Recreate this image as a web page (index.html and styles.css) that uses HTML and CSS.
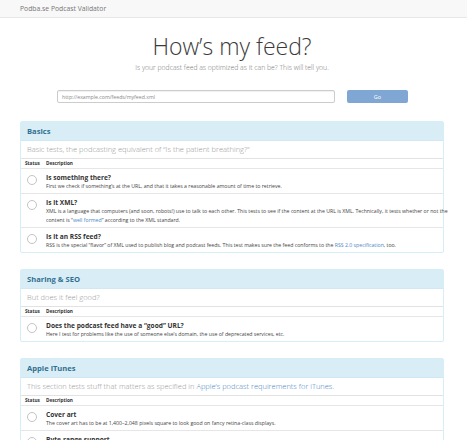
FILE: index.html
```html
<!DOCTYPE html>
<html lang="en">
<head>
<meta charset="utf-8">
<title>Podba.se Podcast Validator</title>
<link rel="stylesheet" href="styles.css">
</head>
<body>
<nav class="navbar"><span class="brand">Podba.se Podcast Validator</span></nav>
<main class="page">
  <header class="hero">
    <h1 class="title">How’s my feed?</h1>
    <p class="lead">Is your podcast feed as optimized as it can be? This will tell you.</p>
  </header>
  <form class="feed-form">
    <input class="feed-input" type="text" placeholder="http://example.com/feeds/myfeed.xml">
    <button class="go" type="button">Go</button>
  </form>

  <section class="panel">
    <div class="panel-heading">Basics</div>
    <div class="panel-body">Basic tests, the podcasting equivalent of “Is the patient breathing?”</div>
    <div class="thead"><span>Status</span><span>Description</span></div>
    <div class="row">
      <span class="status"></span>
      <div class="desc"><div class="test-title">Is something there?</div><div class="test-text">First we check if something’s at the URL, and that it takes a reasonable amount of time to retrieve.</div></div>
    </div>
    <div class="row">
      <span class="status"></span>
      <div class="desc"><div class="test-title">Is it XML?</div><div class="test-text wide">XML is a language that computers (and soon, robots!) use to talk to each other. This tests to see if the content at the URL is XML. Technically, it tests whether or not the content is “<a href="#">well formed</a>” according to the XML standard.</div></div>
    </div>
    <div class="row">
      <span class="status"></span>
      <div class="desc"><div class="test-title">Is it an RSS feed?</div><div class="test-text">RSS is the special “flavor” of XML used to publish blog and podcast feeds. This test makes sure the feed conforms to the <a href="#">RSS 2.0 specification</a>, too.</div></div>
    </div>
  </section>

  <section class="panel">
    <div class="panel-heading">Sharing &amp; SEO</div>
    <div class="panel-body">But does it feel good?</div>
    <div class="thead"><span>Status</span><span>Description</span></div>
    <div class="row">
      <span class="status"></span>
      <div class="desc"><div class="test-title">Does the podcast feed have a “good” URL?</div><div class="test-text">Here I test for problems like the use of someone else’s domain, the use of deprecated services, etc.</div></div>
    </div>
  </section>

  <section class="panel">
    <div class="panel-heading">Apple iTunes</div>
    <div class="panel-body">This section tests stuff that matters as specified in <a href="#">Apple’s podcast requirements for iTunes</a>.</div>
    <div class="thead"><span>Status</span><span>Description</span></div>
    <div class="row">
      <span class="status"></span>
      <div class="desc"><div class="test-title">Cover art</div><div class="test-text">The cover art has to be at 1,400–2,048 pixels square to look good on fancy retina-class displays.</div></div>
    </div>
    <div class="row">
      <span class="status"></span>
      <div class="desc"><div class="test-title">Byte-range support</div><div class="test-text">Apple requires that the server hosting your media files supports byte-range requests.</div></div>
    </div>
  </section>
</main>
</body>
</html>
```
FILE: styles.css
```css
html, body {
  margin: 0;
  padding: 0;
  background: #fff;
  font-family: "Open Sans", "Liberation Sans", sans-serif;
  color: #333;
}
.navbar {
  height: 17px;
  background: #f8f8f8;
  border-bottom: 1px solid #e7e7e7;
  display: flex;
  align-items: center;
  padding-left: 20px;
}
.brand {
  font-size: 6.8px;
  color: #777;
}
.page {
  width: 424px;
  margin-left: 20px;
}
.hero {
  text-align: center;
  padding-top: 13px;
}
.title {
  margin: 0;
  font-size: 23px;
  line-height: 30px;
  font-weight: 300;
  color: #3a3a3a;
}
.lead {
  margin: 2px 0 0;
  font-size: 6.85px;
  line-height: 10px;
  font-weight: 300;
  color: #777;
}
.feed-form {
  display: flex;
  gap: 12px;
  margin: 17px 0 0 37px;
}
.feed-input {
  box-sizing: border-box;
  width: 278px;
  height: 13px;
  border: 1px solid #ccc;
  border-radius: 2px;
  padding: 0 4px;
  font-family: inherit;
  font-size: 5.2px;
  color: #555;
  box-shadow: inset 0 1px 1px rgba(0,0,0,0.06);
}
.feed-input::placeholder { color: #888; }
.go {
  width: 61px;
  height: 13px;
  border: 0;
  border-radius: 2px;
  background: #80a7d3;
  color: #fff;
  font-family: inherit;
  font-size: 5.5px;
  padding: 0;
}
.panel {
  margin-top: 16px;
  border: 1px solid #d6eef6;
  border-radius: 2px;
}
.feed-form + .panel { margin-top: 18px; }
.panel-heading {
  height: 18px;
  background: #d9edf7;
  border-bottom: 1px solid #d0e8f3;
  color: #31708f;
  font-weight: 700;
  font-size: 7.6px;
  line-height: 18px;
  padding-left: 6px;
}
.panel-body {
  height: 17px;
  line-height: 17px;
  padding-left: 6px;
  font-size: 7.5px;
  font-weight: 300;
  color: #999;
  border-bottom: 1px solid #e2e2e2;
}
.panel-body a { color: #4a86c5; text-decoration: none; }
.thead {
  display: grid;
  grid-template-columns: 21px 1fr;
  height: 9px;
  line-height: 9px;
  font-size: 4.7px;
  font-weight: 700;
  color: #333;
  padding-left: 4px;
  border-bottom: 1px solid #e6e6e6;
}
.row {
  display: grid;
  grid-template-columns: 25px 1fr;
  padding: 4px 0 2px;
  border-bottom: 1px solid #e6e6e6;
}
.row:last-child { border-bottom: 0; }
.status {
  box-sizing: border-box;
  width: 10px;
  height: 10px;
  margin: 2px 0 0 6px;
  border: 1.4px solid #c4c4c4;
  border-radius: 50%;
}
.test-title {
  font-size: 6.6px;
  line-height: 9px;
  font-weight: 700;
  color: #333;
}
.test-text {
  font-size: 5.2px;
  line-height: 9px;
  color: #444;
}
.test-text.wide { margin-right: -8px; }
.test-text a { color: #4a86c5; text-decoration: none; }
```
